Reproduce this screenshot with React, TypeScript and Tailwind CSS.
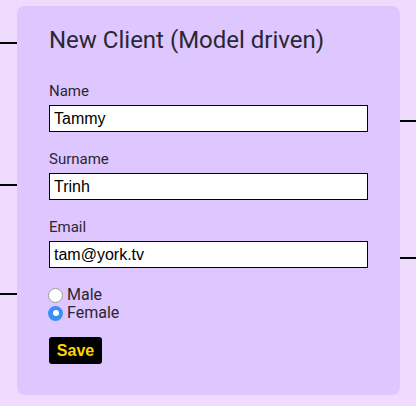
export default function App() {
  return (
    <div className="relative w-[416px] h-[406px] bg-[#efdbfe] overflow-hidden font-['Roboto',sans-serif]">
      {/* decorative connector lines */}
      <div className="absolute left-0 top-[42px] w-[38px] h-[2px] bg-black" />
      <div className="absolute left-0 top-[184px] w-[38px] h-[2px] bg-black" />
      <div className="absolute left-0 top-[293px] w-[38px] h-[2px] bg-black" />
      <div className="absolute left-[386px] top-[120px] w-[30px] h-[2px] bg-black" />
      <div className="absolute left-[386px] top-[257px] w-[30px] h-[2px] bg-black" />

      <div className="absolute left-[17px] top-[6px] w-[383px] h-[389px] rounded-[8px] bg-[#ddc7fe] pl-[32px] pt-[20px]">
        <h1 className="text-[24px] leading-[28px] text-[#2b2633]">New Client (Model driven)</h1>

        <form className="mt-[28px] flex flex-col">
          <Field label="Name" value="Tammy" />
          <Field label="Surname" value="Trinh" />
          <Field label="Email" value="tam@york.tv" />

          <div className="flex flex-col text-[16px] leading-[18px] text-[#2b2633]">
            <label className="flex items-center">
              <span className="w-[15px] h-[15px] rounded-full border border-[#9a9a9a] bg-white mr-[4px] ml-[-1px]" />
              Male
            </label>
            <label className="flex items-center">
              <span className="w-[15px] h-[15px] rounded-full bg-[#3a8ef6] mr-[4px] ml-[-1px] flex items-center justify-center">
                <span className="w-[6px] h-[6px] rounded-full bg-white" />
              </span>
              Female
            </label>
          </div>

          <button
            type="button"
            className="mt-[15px] w-[53px] h-[27px] rounded-[3px] bg-black text-[#ffd400] font-bold text-[16px] font-['Liberation_Sans',sans-serif] leading-none"
          >
            Save
          </button>
        </form>
      </div>
    </div>
  );
}

function Field({ label, value }: { label: string; value: string }) {
  return (
    <div className="flex flex-col mb-[18px]">
      <label className="text-[15px] leading-[18px] text-[#2b2633] mb-[5px]">{label}</label>
      <input
        readOnly
        value={value}
        className="w-[319px] h-[27px] border-[1.5px] border-black bg-white px-[4px] text-[16px] text-black font-['Liberation_Sans',sans-serif] outline-none"
      />
    </div>
  );
}
